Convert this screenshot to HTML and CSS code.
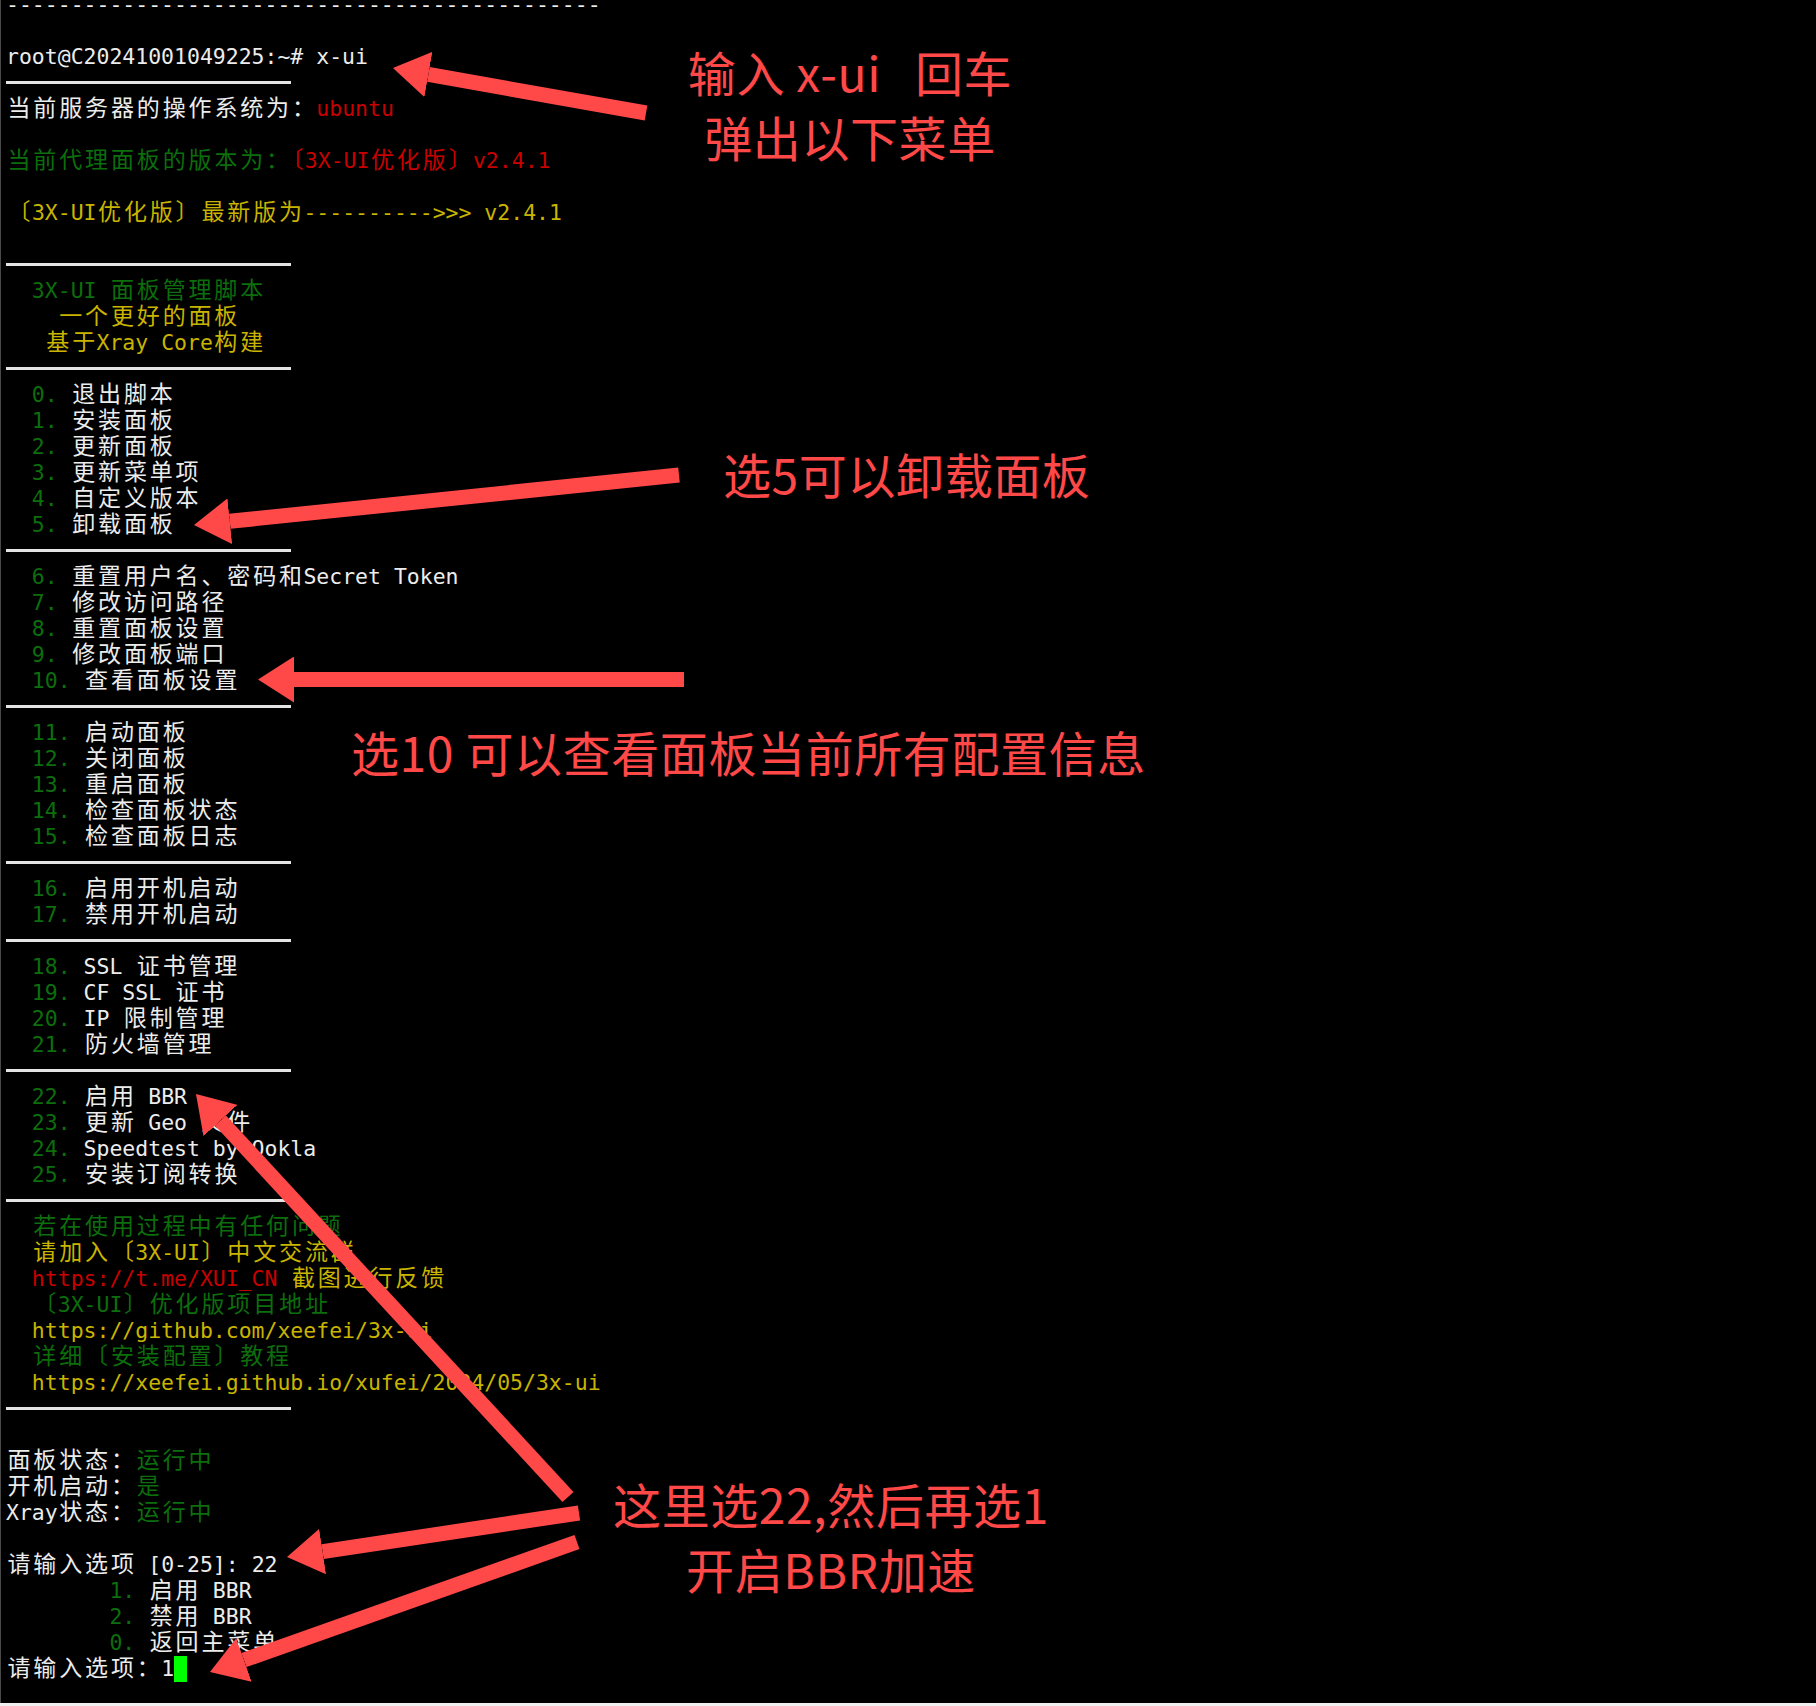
FILE: index.html
```html
<!DOCTYPE html>
<html lang="zh-CN">
<head>
<meta charset="UTF-8">
<title>x-ui 菜单</title>
<link rel="stylesheet" href="styles.css">
</head>
<body>
    <div class="term">
        <div class="screen">
            <div class="ln">----------------------------------------------</div>
            <div class="ln"></div>
            <div class="ln">root@C20241001049225:~# x-ui</div>
            <div class="rule"></div>
            <div class="ln"><span class="c">当前服务器的操作系统为：</span><span class="r">ubuntu</span></div>
            <div class="ln"></div>
            <div class="ln g"><span class="c">当前代理面板的版本为：</span><span class="r"><span class="c">〔</span>3X-UI<span class="c">优化版〕</span>v2.4.1</span></div>
            <div class="ln"></div>
            <div class="ln y"><span class="c">〔</span>3X-UI<span class="c">优化版〕最新版为</span>----------&gt;&gt;&gt; v2.4.1</div>
            <div class="ln"></div>
            <div class="rule"></div>
            <div class="ln g">  3X-UI <span class="c">面板管理脚本</span></div>
            <div class="ln y">    <span class="c">一个更好的面板</span></div>
            <div class="ln y">   <span class="c">基于</span>Xray Core<span class="c">构建</span></div>
            <div class="rule"></div>
            <div class="ln">  <span class="g">0.</span> <span class="c">退出脚本</span></div>
            <div class="ln">  <span class="g">1.</span> <span class="c">安装面板</span></div>
            <div class="ln">  <span class="g">2.</span> <span class="c">更新面板</span></div>
            <div class="ln">  <span class="g">3.</span> <span class="c">更新菜单项</span></div>
            <div class="ln">  <span class="g">4.</span> <span class="c">自定义版本</span></div>
            <div class="ln">  <span class="g">5.</span> <span class="c">卸载面板</span></div>
            <div class="rule"></div>
            <div class="ln">  <span class="g">6.</span> <span class="c">重置用户名、密码和</span>Secret Token</div>
            <div class="ln">  <span class="g">7.</span> <span class="c">修改访问路径</span></div>
            <div class="ln">  <span class="g">8.</span> <span class="c">重置面板设置</span></div>
            <div class="ln">  <span class="g">9.</span> <span class="c">修改面板端口</span></div>
            <div class="ln">  <span class="g">10.</span> <span class="c">查看面板设置</span></div>
            <div class="rule"></div>
            <div class="ln">  <span class="g">11.</span> <span class="c">启动面板</span></div>
            <div class="ln">  <span class="g">12.</span> <span class="c">关闭面板</span></div>
            <div class="ln">  <span class="g">13.</span> <span class="c">重启面板</span></div>
            <div class="ln">  <span class="g">14.</span> <span class="c">检查面板状态</span></div>
            <div class="ln">  <span class="g">15.</span> <span class="c">检查面板日志</span></div>
            <div class="rule"></div>
            <div class="ln">  <span class="g">16.</span> <span class="c">启用开机启动</span></div>
            <div class="ln">  <span class="g">17.</span> <span class="c">禁用开机启动</span></div>
            <div class="rule"></div>
            <div class="ln">  <span class="g">18.</span> SSL <span class="c">证书管理</span></div>
            <div class="ln">  <span class="g">19.</span> CF SSL <span class="c">证书</span></div>
            <div class="ln">  <span class="g">20.</span> IP <span class="c">限制管理</span></div>
            <div class="ln">  <span class="g">21.</span> <span class="c">防火墙管理</span></div>
            <div class="rule"></div>
            <div class="ln">  <span class="g">22.</span> <span class="c">启用</span> BBR</div>
            <div class="ln">  <span class="g">23.</span> <span class="c">更新</span> Geo <span class="c">文件</span></div>
            <div class="ln">  <span class="g">24.</span> Speedtest by Ookla</div>
            <div class="ln">  <span class="g">25.</span> <span class="c">安装订阅转换</span></div>
            <div class="rule"></div>
            <div class="ln g">  <span class="c">若在使用过程中有任何问题</span></div>
            <div class="ln y">  <span class="c">请加入〔</span>3X-UI<span class="c">〕中文交流群</span></div>
            <div class="ln">  <span class="r">https://t.me/XUI_CN</span> <span class="y c">截图进行反馈</span></div>
            <div class="ln g">  <span class="c">〔</span>3X-UI<span class="c">〕优化版项目地址</span></div>
            <div class="ln y">  https://github.com/xeefei/3x-ui</div>
            <div class="ln g">  <span class="c">详细〔安装配置〕教程</span></div>
            <div class="ln y">  https://xeefei.github.io/xufei/2024/05/3x-ui</div>
            <div class="rule"></div>
            <div class="ln"></div>
            <div class="ln"><span class="c">面板状态：</span><span class="g c">运行中</span></div>
            <div class="ln"><span class="c">开机启动：</span><span class="g c">是</span></div>
            <div class="ln">Xray<span class="c">状态：</span><span class="g c">运行中</span></div>
            <div class="ln"></div>
            <div class="ln"><span class="c">请输入选项</span> [0-25]: 22</div>
            <div class="ln">        <span class="g">1.</span> <span class="c">启用</span> BBR</div>
            <div class="ln">        <span class="g">2.</span> <span class="c">禁用</span> BBR</div>
            <div class="ln">        <span class="g">0.</span> <span class="c">返回主菜单</span></div>
            <div class="ln"><span class="c">请输入选项：</span>1<span class="cursor"></span></div>
        </div>
    </div>

    <!-- annotations drawn over the screenshot -->
    <div class="note note-center n1">输入 x-ui   回车<br>弹出以下菜单</div>
    <div class="note n2">选5可以卸载面板</div>
    <div class="note n3">选10 可以查看面板当前所有配置信息</div>
    <div class="note note-center n4">这里选22,然后再选1<br>开启BBR加速</div>

    <svg class="marks" width="1816" height="1706" viewBox="0 0 1816 1706">
        <defs>
            <marker id="head" markerUnits="userSpaceOnUse" markerWidth="36" markerHeight="46" viewBox="0 -23 36 46" refX="0" refY="0" orient="auto">
                <path d="M0,-23 L36,0 L0,23 Z" fill="#ff4848"/>
            </marker>
        </defs>
        <g stroke="#ff4848" stroke-width="15" marker-end="url(#head)">
            <line x1="646" y1="113" x2="428.4" y2="74.4"/>
            <line x1="679" y1="475" x2="229.8" y2="521.3"/>
            <line x1="684" y1="679.5" x2="294" y2="679.5"/>
            <line x1="568" y1="1497" x2="220.4" y2="1120.5"/>
            <line x1="579" y1="1513" x2="322.6" y2="1551.6"/>
            <line x1="577" y1="1542" x2="243.9" y2="1660"/>
        </g>
    </svg>
</body>
</html>
```

FILE: styles.css
```css
body {
    margin: 0;
    width: 1816px;
    height: 1706px;
    position: relative;
    overflow: hidden;
    background-color: #efefef;
}

/* terminal window */
.term {
    height: 1703px;
    background-color: #000;
    border-left: 1px solid #4a4a4a;
    padding-left: 5px;
    overflow: hidden;
    font-family: "DejaVu Sans Mono", "Liberation Mono", monospace;
    font-size: 21.48px;
    line-height: 26px;
    color: #ececec;
}

.screen {
    margin-top: -8px; /* first line is cut off at the top */
}

.ln {
    height: 26px;
    white-space: pre;
}

.rule {
    width: 285px;
    height: 26px;
    padding-top: 11px;
    box-sizing: border-box;
}

.rule::before {
    content: "";
    display: block;
    height: 3px;
    background-color: #e4e4e4;
}

/* chinese glyphs take two cells */
.c {
    font-family: "Noto Sans CJK SC", sans-serif;
    font-size: 23px;
    line-height: 16px;
    letter-spacing: 2.86px;
    margin-left: 1.5px;
    margin-right: -1.5px;
}

.g {
    color: #0c6e0c;
}

.r {
    color: #c80000;
}

.y {
    color: #c9b400;
}

.cursor {
    display: inline-block;
    width: 13px;
    height: 26px;
    vertical-align: top;
    background-color: #00ff00;
}

/* red notes */
.note {
    position: absolute;
    font-family: "Noto Sans CJK SC", sans-serif;
    font-size: 48px;
    line-height: 65px;
    letter-spacing: 0.6px;
    color: #ff4848;
    white-space: pre;
}

.note-center {
    width: 500px;
    text-align: center;
}

.n1 {
    left: 600px;
    top: 39px;
}

.n2 {
    left: 723px;
    top: 441px;
}

.n3 {
    left: 351px;
    top: 719px;
}

.n4 {
    left: 581px;
    top: 1471px;
}

.marks {
    position: absolute;
    left: 0;
    top: 0;
}
```
